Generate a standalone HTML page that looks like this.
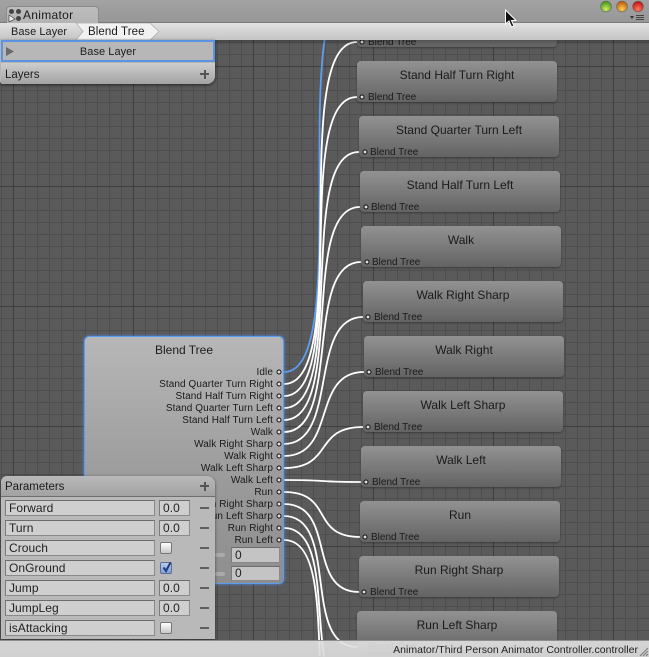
<!DOCTYPE html>
<html><head><meta charset="utf-8"><style>
html,body{margin:0;padding:0;width:649px;height:657px;overflow:hidden}
body{position:relative;background:#595959;font-family:"Liberation Sans",sans-serif;color:#1c1c1c}
div,span{position:absolute;box-sizing:border-box;white-space:nowrap}
svg{display:block;overflow:hidden}
#grid{left:0;top:0;width:649px;height:657px;background-color:#5a5a5a;background-image:
linear-gradient(to right,#3f3f3f 1px,transparent 1px),linear-gradient(to bottom,#3f3f3f 1px,transparent 1px),
linear-gradient(to right,#4e4e4e 1px,transparent 1px),linear-gradient(to bottom,#4e4e4e 1px,transparent 1px);
background-size:120px 120px,120px 120px,12px 12px,12px 12px;background-position:13px 0,0 66px,1px 0,0 6px}
.n{width:200px;height:41px;border-radius:4px;background:linear-gradient(#929292,#636363);box-shadow:0 1px 2px rgba(0,0,0,.35)}
.n b{position:absolute;left:0;right:0;top:7px;text-align:center;font:12px "Liberation Sans",sans-serif;color:#1a1a1a}
.n i{position:absolute;left:11px;top:31px;font:normal 10px "Liberation Sans",sans-serif;color:#1a1a1a}
.l{right:376px;font-size:10px;letter-spacing:.09px;line-height:12px;height:12px;color:#1a1a1a}
.f{height:16px;background:#cfcfcf;border:1px solid #8a8a8a;border-top-color:#6c6c6c;border-left-color:#7a7a7a;font-size:12px;line-height:14px;padding-left:3px;letter-spacing:.05px;color:#222}
.m{left:200px;width:9px;height:2px;background:#5f5f5f}
.c{left:160px;width:12px;height:12px;border-radius:2px;background:linear-gradient(#fff,#c8c8c8);border:1px solid #777}
</style></head><body>
<div id="grid"></div>

<svg style="position:absolute;left:0;top:0" width="649" height="657" fill="none" stroke-width="1.8" stroke="#fff">
<path stroke="#5f9df0" d="M284 372C356 372 283 -13 355 -13"/>
<path d="M284 384C354 384 287 42 357 42"/>
<path d="M284 396C351 396 290 97 357 97"/>
<path d="M284 408C348 408 295 152 359 152"/>
<path d="M284 420C345 420 299 207 360 207"/>
<path d="M284 432C342 432 303 262 361 262"/>
<path d="M284 444C339.500 444 307.500 317 363 317"/>
<path d="M284 456C337 456 311 372 364 372"/>
<path d="M284 468C334 468 313 427 363 427"/>
<path d="M284 480C331 480 314 482 361 482"/>
<path d="M284 492C334 492 310 537 360 537"/>
<path d="M284 504C337 504 306 592 359 592"/>
<path d="M284 516C340 516 301 647 357 647"/>
<path d="M284 528C324.100 528 315.700 608.400 324.200 656.500"/>
<path d="M284 540C316.400 540 317.400 599.400 319.800 656"/>
</svg>

<div class="n" style="left:357px;top:6px"><i>Blend Tree</i></div>
<div class="n" style="left:357px;top:61px"><b>Stand Half Turn Right</b><i>Blend Tree</i></div>
<div class="n" style="left:359px;top:116px"><b>Stand Quarter Turn Left</b><i>Blend Tree</i></div>
<div class="n" style="left:360px;top:171px"><b>Stand Half Turn Left</b><i>Blend Tree</i></div>
<div class="n" style="left:361px;top:226px"><b>Walk</b><i>Blend Tree</i></div>
<div class="n" style="left:363px;top:281px"><b>Walk Right Sharp</b><i>Blend Tree</i></div>
<div class="n" style="left:364px;top:336px"><b>Walk Right</b><i>Blend Tree</i></div>
<div class="n" style="left:363px;top:391px"><b>Walk Left Sharp</b><i>Blend Tree</i></div>
<div class="n" style="left:361px;top:446px"><b>Walk Left</b><i>Blend Tree</i></div>
<div class="n" style="left:360px;top:501px"><b>Run</b><i>Blend Tree</i></div>
<div class="n" style="left:359px;top:556px"><b>Run Right Sharp</b><i>Blend Tree</i></div>
<div class="n" style="left:357px;top:611px"><b>Run Left Sharp</b><i>Blend Tree</i></div>

<svg style="position:absolute;left:0;top:0" width="649" height="657" fill="#ddd" stroke="#111" stroke-width="1">
<circle cx="362" cy="42" r="2"/><circle cx="362" cy="97" r="2"/><circle cx="365" cy="152" r="2"/><circle cx="366" cy="207" r="2"/><circle cx="367" cy="262" r="2"/><circle cx="368" cy="317" r="2"/><circle cx="369" cy="372" r="2"/><circle cx="368" cy="427" r="2"/><circle cx="366" cy="482" r="2"/><circle cx="365" cy="537" r="2"/><circle cx="364" cy="592" r="2"/>
</svg>

<div style="left:85px;top:337px;width:198px;height:246px;border-radius:4px;background:linear-gradient(#b7b7b7,#9a9a9a 60%,#8e8e8e);box-shadow:0 0 0 1px #5a9cf0,0 0 3px 1px #4c8fe8"></div>
<div style="left:84px;top:343px;width:200px;text-align:center;font-size:12px;line-height:14px">Blend Tree</div>
<div class="l" style="top:367px">Idle</div>
<div class="l" style="top:379px">Stand Quarter Turn Right</div>
<div class="l" style="top:391px">Stand Half Turn Right</div>
<div class="l" style="top:403px">Stand Quarter Turn Left</div>
<div class="l" style="top:415px">Stand Half Turn Left</div>
<div class="l" style="top:427px">Walk</div>
<div class="l" style="top:439px">Walk Right Sharp</div>
<div class="l" style="top:451px">Walk Right</div>
<div class="l" style="top:463px">Walk Left Sharp</div>
<div class="l" style="top:475px">Walk Left</div>
<div class="l" style="top:487px">Run</div>
<div class="l" style="top:499px">Run Right Sharp</div>
<div class="l" style="top:511px">Run Left Sharp</div>
<div class="l" style="top:523px">Run Right</div>
<div class="l" style="top:535px">Run Left</div>
<svg style="position:absolute;left:0;top:0" width="649" height="657" fill="#ddd" stroke="#111" stroke-width="1">
<circle cx="279" cy="372" r="2"/><circle cx="279" cy="384" r="2"/><circle cx="279" cy="396" r="2"/><circle cx="279" cy="408" r="2"/><circle cx="279" cy="420" r="2"/><circle cx="279" cy="432" r="2"/><circle cx="279" cy="444" r="2"/><circle cx="279" cy="456" r="2"/><circle cx="279" cy="468" r="2"/><circle cx="279" cy="480" r="2"/><circle cx="279" cy="492" r="2"/><circle cx="279" cy="504" r="2"/><circle cx="279" cy="516" r="2"/><circle cx="279" cy="528" r="2"/><circle cx="279" cy="540" r="2"/>
</svg>
<div style="left:215px;top:553px;width:10px;height:4px;background:#aaa;border-radius:2px"></div>
<div style="left:215px;top:572px;width:10px;height:4px;background:#aaa;border-radius:2px"></div>
<div class="f" style="left:231px;top:547px;width:49px;height:16px;background:#c4c4c4">0</div>
<div class="f" style="left:231px;top:566px;width:49px;height:15px;background:#c4c4c4;line-height:13px">0</div>

<!-- Parameters panel -->
<div style="left:1px;top:476px;width:214px;height:163px;background:#b9b9b9;border-radius:6px 8px 0 0;box-shadow:0 1px 3px rgba(0,0,0,.5)"></div>
<div style="left:1px;top:476px;width:214px;height:21px;border-radius:6px 8px 0 0;background:linear-gradient(#b9b9b9,#a2a2a2);border-bottom:1px solid #6f6f6f"></div>
<div style="left:5px;top:480px;font-size:11.5px;line-height:14px">Parameters</div>
<div style="left:200px;top:485px;width:9px;height:2px;background:#555"></div>
<div style="left:203.500px;top:482px;width:2px;height:9px;background:#555"></div>

<div class="f" style="left:5px;top:500px;width:150px">Forward</div><div class="f" style="left:159px;top:500px;width:31px">0.0</div><div class="m" style="top:507px"></div>
<div class="f" style="left:5px;top:520px;width:150px">Turn</div><div class="f" style="left:159px;top:520px;width:31px">0.0</div><div class="m" style="top:527px"></div>
<div class="f" style="left:5px;top:540px;width:150px">Crouch</div><div class="c" style="top:542px"></div><div class="m" style="top:547px"></div>
<div class="f" style="left:5px;top:560px;width:150px">OnGround</div>
<div class="c" style="top:562px;background:linear-gradient(#b7cdf0,#7f9fd8);border-color:#5d6f90"></div>
<svg style="position:absolute;left:161px;top:561px" width="12" height="12" fill="none" stroke="#1f3d78" stroke-width="2"><path d="M2.5 6.5L5 10L9.5 1.5"/></svg>
<div class="m" style="top:567px"></div>
<div class="f" style="left:5px;top:580px;width:150px">Jump</div><div class="f" style="left:159px;top:580px;width:31px">0.0</div><div class="m" style="top:587px"></div>
<div class="f" style="left:5px;top:600px;width:150px">JumpLeg</div><div class="f" style="left:159px;top:600px;width:31px">0.0</div><div class="m" style="top:607px"></div>
<div class="f" style="left:5px;top:620px;width:150px">isAttacking</div><div class="c" style="top:622px"></div><div class="m" style="top:627px"></div>

<!-- Status bar -->
<div style="left:0;top:640px;width:649px;height:17px;background:linear-gradient(rgba(226,226,226,.9),rgba(218,218,218,.92));border-top:1px solid #8e8e8e"></div>
<div style="right:11px;top:643px;font-size:10.5px;letter-spacing:.03px;line-height:14px;color:#222">Animator/Third Person Animator Controller.controller</div>
<svg style="position:absolute;left:639px;top:647px" width="10" height="10" stroke="#777" stroke-width="1"><path d="M1 9L9 1M4 9L9 4M7 9L9 7"/></svg>

<!-- Top bars -->
<div style="left:0;top:0;width:649px;height:23px;background:linear-gradient(#a3a3a3,#979797);border-bottom:1px solid #7a7a7a"></div>
<div style="left:6px;top:6px;width:93px;height:17px;border-radius:4px 4px 0 0;background:linear-gradient(#bdbdbd,#b4b4b4);border:1px solid #8b8b8b;border-bottom:none"></div>
<svg style="position:absolute;left:8px;top:8px" width="14" height="14"><circle cx="3.5" cy="3.5" r="2.5" fill="#444"/><circle cx="10.5" cy="3.5" r="2.5" fill="#444"/><circle cx="10.5" cy="10.5" r="2.5" fill="#444"/><path d="M1 7L7 11L1 14Z" fill="#eee" stroke="#444" stroke-width=".7"/></svg>
<div style="left:23px;top:8px;font-size:12px;letter-spacing:.3px;line-height:14px">Animator</div>
<div style="left:0;top:23px;width:649px;height:17px;background:linear-gradient(#e2e2e2,#c4c4c4)"></div>
<svg style="position:absolute;left:0;top:23px" width="170" height="17"><path d="M76 0H150L159 8.5L150 17H76L83 8.5Z" fill="#f1f1f1" stroke="#a8a8a8" stroke-width=".7"/></svg>
<div style="left:11px;top:25px;font-size:11px;letter-spacing:.05px;line-height:14px">Base Layer</div>
<div style="left:88px;top:25px;font-size:11.5px;letter-spacing:.1px;line-height:14px">Blend Tree</div>

<div style="left:0;top:40px;width:649px;height:5px;background:linear-gradient(rgba(0,0,0,.22),transparent)"></div>

<svg style="position:absolute;left:598px;top:0" width="51" height="24">
<defs>
<radialGradient id="g1" cx=".5" cy=".75" r=".65"><stop offset="0" stop-color="#d0f060"/><stop offset="1" stop-color="#4a9a1c"/></radialGradient>
<radialGradient id="g2" cx=".5" cy=".75" r=".65"><stop offset="0" stop-color="#ffd050"/><stop offset="1" stop-color="#c06010"/></radialGradient>
<radialGradient id="g3" cx=".5" cy=".75" r=".65"><stop offset="0" stop-color="#ff7a60"/><stop offset="1" stop-color="#c01818"/></radialGradient>
</defs>
<circle cx="8" cy="6.5" r="5.4" fill="url(#g1)" stroke="#666" stroke-width=".6"/>
<circle cx="24" cy="6.5" r="5.4" fill="url(#g2)" stroke="#666" stroke-width=".6"/>
<circle cx="40" cy="6.5" r="5.4" fill="url(#g3)" stroke="#666" stroke-width=".6"/>
<path d="M32 16H36L34 19Z" fill="#333"/>
<path d="M38 15.500H46M38 17.500H46M38 19.500H46" stroke="#444" stroke-width="1"/>
</svg>

<!-- Layers panel -->
<div style="left:0;top:40px;width:215px;height:44px;border-radius:0 0 8px 3px;background:#b5b5b5;box-shadow:0 1px 3px rgba(0,0,0,.6)"></div>
<div style="left:1px;top:40px;width:214px;height:22px;background:#b7b7b7;border:2px solid #5b93e0"></div>
<svg style="position:absolute;left:6px;top:47px" width="9" height="9"><path d="M0 0L8 4.500L0 9Z" fill="#6a6a6a"/></svg>
<div style="left:1px;top:45px;width:214px;text-align:center;font-size:11px;letter-spacing:.05px;line-height:14px">Base Layer</div>
<div style="left:1px;top:63px;width:214px;height:21px;border-radius:0 0 8px 3px;background:linear-gradient(#cdcdcd,#a3a3a3)"></div>
<div style="left:5px;top:68px;font-size:11.5px;line-height:14px">Layers</div>
<div style="left:200px;top:73px;width:9px;height:2px;background:#555"></div>
<div style="left:203.500px;top:70px;width:2px;height:9px;background:#555"></div>

<!-- Cursor -->
<svg style="position:absolute;left:504px;top:9px" width="14" height="20"><path d="M1.5 1V15L5 12L7.5 18L10 17L7.5 11.5H12Z" fill="#111" stroke="#fff" stroke-width="1"/></svg>
</body></html>
